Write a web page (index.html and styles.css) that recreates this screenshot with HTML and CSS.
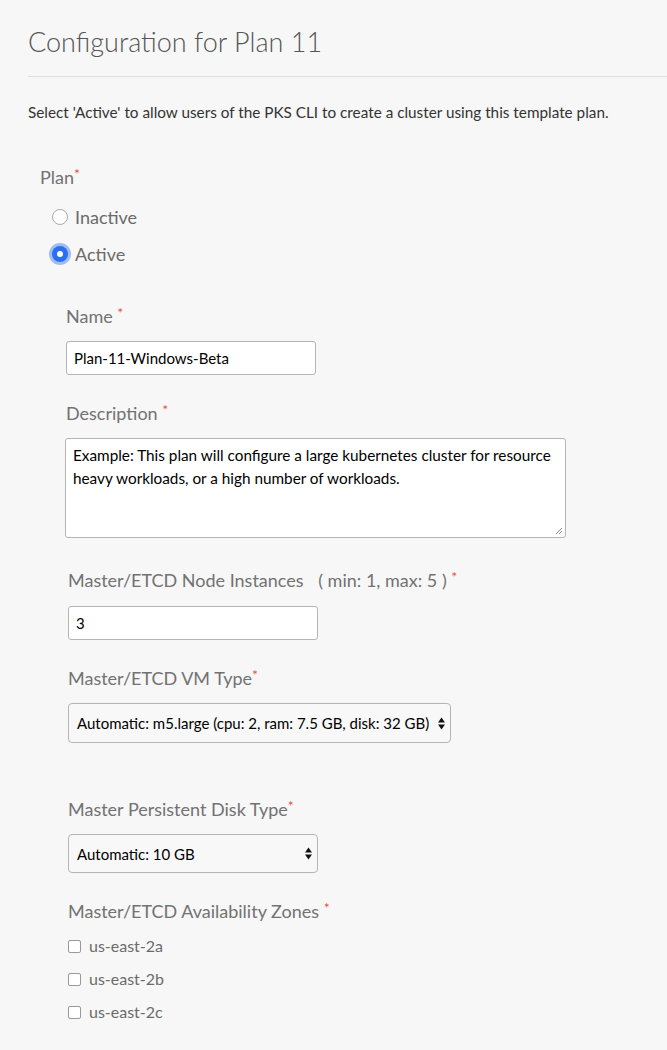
FILE: index.html
```html
<!DOCTYPE html>
<html>
<head>
<meta charset="utf-8">
<link rel="stylesheet" href="styles.css">
</head>
<body>
<div class="page">
  <h1 class="title">Configuration for Plan 11</h1>
  <hr class="rule">
  <p class="intro">Select 'Active' to allow users of the PKS CLI to create a cluster using this template plan.</p>

  <div class="plan">
    <div class="label">Plan<span class="req">*</span></div>
    <div class="radios">
      <label class="radio"><span class="dot"></span><span>Inactive</span></label>
      <label class="radio"><span class="dot on"></span><span>Active</span></label>
    </div>

    <div class="fields">
      <div class="field f-name">
        <div class="label">Name <span class="req">*</span></div>
        <div class="input w250">Plan-11-Windows-Beta</div>
      </div>

      <div class="field f-desc">
        <div class="label">Description <span class="req">*</span></div>
        <div class="textarea">Example: This plan will configure a large kubernetes cluster for resource heavy workloads, or a high number of workloads.
          <svg class="grip" width="8" height="8" viewBox="0 0 8 8"><path d="M7 1L1 7M7 4L4 7" stroke="#888" stroke-width="1" fill="none"/></svg>
        </div>
      </div>

      <div class="field f-inst">
        <div class="label">Master/ETCD Node Instances <span class="range">( min: 1, max: 5 )</span> <span class="req">*</span></div>
        <div class="input w250">3</div>
      </div>

      <div class="field f-vm">
        <div class="label">Master/ETCD VM Type<span class="req">*</span></div>
        <div class="select wvm"><span>Automatic: m5.large (cpu: 2, ram: 7.5 GB, disk: 32 GB)</span>
          <svg width="7" height="13" viewBox="0 0 7 13"><path d="M3.5 0.5L7 5.5H0Z M3.5 12.5L7 7.5H0Z" fill="#111"/></svg>
        </div>
      </div>

      <div class="field f-disk">
        <div class="label">Master Persistent Disk Type<span class="req">*</span></div>
        <div class="select w250"><span>Automatic: 10 GB</span>
          <svg width="7" height="13" viewBox="0 0 7 13"><path d="M3.5 0.5L7 5.5H0Z M3.5 12.5L7 7.5H0Z" fill="#111"/></svg>
        </div>
      </div>

      <div class="field f-az">
        <div class="label">Master/ETCD Availability Zones <span class="req">*</span></div>
        <div class="checks">
          <label class="check"><span class="box"></span><span>us-east-2a</span></label>
          <label class="check"><span class="box"></span><span>us-east-2b</span></label>
          <label class="check"><span class="box"></span><span>us-east-2c</span></label>
        </div>
      </div>
    </div>
  </div>
</div>
</body>
</html>
```

FILE: styles.css
```css
* { box-sizing: border-box; }
html, body { margin: 0; padding: 0; background: #f7f7f7; }
body { font-family: Lato, "Open Sans", sans-serif; color: #333; }

.page { padding-left: 28px; padding-top: 24px; }

.title {
  margin: 0;
  font-weight: 300;
  font-size: 27px;
  line-height: 36px;
  color: #555;
}
.rule {
  margin: 16px 0 0 0;
  border: 0;
  border-top: 1px solid #dedede;
}
.intro {
  margin: 25px 0 0 0;
  font-size: 15.3px;
  line-height: 20px;
  color: #333;
}

.plan { padding-left: 12px; margin-top: 43px; }

.label {
  font-size: 18px;
  line-height: 24px;
  color: #727272;
  font-weight: 400;
}
.req { color: #e5534b; font-size: 14px; vertical-align: top; line-height: 18px; }
.range { margin-left: 10px; }

.radios { display: flex; flex-direction: column; gap: 13px; margin-top: 16px; padding-left: 12px; }
.radio { display: flex; align-items: center; gap: 7px; font-size: 18px; line-height: 24px; color: #6b6b6b; }
.dot {
  width: 16px; height: 16px; border-radius: 50%;
  border: 1px solid #aaa; background: #fff;
}
.dot.on {
  background: #2a6ff0; border: 0;
  box-shadow: 0 0 0 3px rgba(90,140,240,0.55);
  display: flex; align-items: center; justify-content: center;
}
.dot.on::after { content: ""; width: 6px; height: 6px; border-radius: 50%; background: #fff; }

.fields { padding-left: 26px; }
.field .label { margin-bottom: 13px; }
.f-name { margin-top: 38px; }
.f-desc { margin-top: 26px; }
.f-inst { margin-top: 30px; padding-left: 2px; }
.f-inst .label { margin-bottom: 14px; }
.f-vm { margin-top: 26px; padding-left: 2px; }
.f-disk { margin-top: 54px; padding-left: 2px; }
.f-az { margin-top: 26px; padding-left: 2px; }

.input {
  height: 34px;
  border: 1px solid #b5b5b5;
  border-radius: 3px;
  background: #fff;
  font-size: 15px;
  color: #000;
  padding: 0 7px;
  display: flex; align-items: center;
}
.w250 { width: 250px; }

.textarea {
  position: relative;
  width: 501px; height: 100px;
  margin-left: -1px;
  border: 1px solid #b5b5b5;
  border-radius: 3px;
  background: #fff;
  font-size: 15.3px; line-height: 23px;
  color: #000;
  padding: 5px 7px;
}
.grip { position: absolute; right: 2px; bottom: 2px; }

.select {
  height: 40px;
  border: 1px solid #b5b5b5;
  border-radius: 4px;
  background: #f8f8f8;
  font-size: 15px;
  color: #000;
  padding: 0 5px 0 8px;
  display: flex; align-items: center; justify-content: space-between;
}
.wvm { width: 383px; }
.f-disk .select { height: 39px; }

.checks { display: flex; flex-direction: column; gap: 11px; margin-top: -1px; }
.check { display: flex; align-items: center; gap: 8px; font-size: 16px; line-height: 22px; color: #6b6b6b; }
.box { width: 13px; height: 13px; border: 1px solid #999; border-radius: 2px; background: #fff; }
```
